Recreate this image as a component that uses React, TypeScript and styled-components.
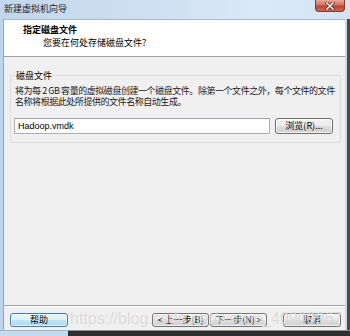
import React from 'react';
import styled, { createGlobalStyle } from 'styled-components';

const GlobalStyle = createGlobalStyle`
  html, body {
    margin: 0;
    padding: 0;
    background: #3a3a3a;
  }
  body {
    font-family: "Noto Sans CJK SC", "Liberation Sans", sans-serif;
    font-size: 9px;
    color: #000000;
  }
`;

const Window = styled.div`
  position: relative;
  width: 350px;
  height: 336px;
  display: flex;
  flex-direction: column;
  overflow: hidden;
  background: #3a3a3a;
`;

const TitleBar = styled.div`
  height: 19px;
  display: flex;
  align-items: flex-start;
  justify-content: space-between;
  background: linear-gradient(to right, #c2d6ec 0%, #cfe0f3 45%, #dbe9f7 75%, #d2e3f4 100%);
`;

const Title = styled.span`
  padding: 3px 0 0 4px;
  line-height: 11px;
  color: #1e1e1e;
`;

const CloseButton = styled.div`
  width: 30px;
  height: 12px;
  margin-right: 5px;
  box-sizing: border-box;
  display: flex;
  align-items: center;
  justify-content: center;
  border: 1px solid #83392d;
  border-top: none;
  border-radius: 0 0 4px 4px;
  background: linear-gradient(to bottom, #e8a899 0%, #d2705e 45%, #c0412d 55%, #cf6a52 100%);
`;

const Middle = styled.div`
  flex: 1;
  display: flex;
  min-height: 0;
`;

const LeftFrame = styled.div`
  width: 3px;
  background: #bcd4ee;
  border-right: 1px solid #8fa6bf;
`;

const RightFrame = styled.div`
  width: 5px;
  border-left: 2px solid #c9d7e6;
  box-sizing: border-box;
  background: #4a4a4a;
`;

const Main = styled.div`
  flex: 1;
  min-width: 0;
  display: flex;
  flex-direction: column;
  background: #f0f0f0;
  border-top: 1px solid #a9b8c8;
`;

const Header = styled.div`
  height: 37px;
  box-sizing: border-box;
  background: #ffffff;
  border-bottom: 1px solid #a0a0a0;
  padding: 4px 0 0 19px;
`;

const HeaderTitle = styled.div`
  font-weight: 700;
  line-height: 11px;
`;

const HeaderSub = styled.div`
  line-height: 11px;
  margin: 2px 0 0 20px;
`;

const Body = styled.div`
  flex: 1;
  padding-top: 13px;
`;

const GroupBox = styled.fieldset`
  min-width: 0;
  margin: 0 4px 0 6px;
  padding: 0 7px 8px 3px;
  border: 1px solid #dcdcdc;
  border-radius: 2px;
`;

const GroupLabel = styled.legend`
  padding: 0 1px;
  margin-left: 1px;
  line-height: 11px;
`;

const Description = styled.p`
  margin: 4px 0 0 1px;
  line-height: 11px;
  color: #1a1a1a;
  white-space: nowrap;
  letter-spacing: -0.45px;
`;

const FileRow = styled.div`
  margin-top: 11px;
  display: flex;
  gap: 5px;
  height: 16px;
`;

const FileInput = styled.div`
  flex: 1;
  box-sizing: border-box;
  background: #ffffff;
  border: 1px solid #abadb3;
  border-top-color: #a0a3a9;
  padding-left: 3px;
  font-family: "Liberation Sans", sans-serif;
  font-size: 9px;
  line-height: 14px;
`;

const Button = styled.button<{ $width?: number; $default?: boolean }>`
  width: ${(p) => p.$width ?? 58}px;
  flex-shrink: 0;
  height: 100%;
  margin: 0;
  padding: 0;
  box-sizing: border-box;
  font-family: "Noto Sans CJK SC", "Liberation Sans", sans-serif;
  font-size: 9px;
  line-height: 12px;
  color: #000000;
  white-space: nowrap;
  border: 1px solid ${(p) => (p.$default ? '#3c7fb1' : '#707070')};
  border-radius: 3px;
  background: ${(p) =>
    p.$default
      ? 'linear-gradient(to bottom, #eaf6fd 0%, #d9f0fc 50%, #bee6fd 51%, #a7d9f5 100%)'
      : 'linear-gradient(to bottom, #f2f2f2 0%, #ebebeb 50%, #dddddd 51%, #cfcfcf 100%)'};
  box-shadow: inset 0 0 0 1px rgba(255, 255, 255, 0.7);
`;

const Footer = styled.div`
  height: 25px;
  box-sizing: border-box;
  border-top: 1px solid #a0a0a0;
  box-shadow: inset 0 1px 0 #ffffff;
  padding: 7px 4px 3px 6px;
  display: flex;
`;

const Spacer = styled.div`
  flex: 1;
`;

const NavGroup = styled.div`
  display: flex;
  gap: 1px;
  margin-right: 16px;
`;

const BottomFrame = styled.div`
  height: 6px;
  display: flex;
`;

const BottomLeft = styled.div`
  width: 68px;
  background: #c6daee;
  border-top: 1px solid #9fb2c6;
`;

const BottomRest = styled.div`
  flex: 1;
  background: #2f2f2f;
  border-top: 1px solid #8e8e8e;
`;

const Watermark = styled.div`
  position: absolute;
  left: 70px;
  top: 309px;
  font-family: "Liberation Sans", sans-serif;
  font-size: 16px;
  line-height: 20px;
  color: rgba(175, 175, 175, 0.45);
  text-shadow: 0 0 1px rgba(255, 255, 255, 0.8);
  white-space: nowrap;
  pointer-events: none;
`;

function CloseIcon() {
  return (
    <svg width="10" height="8" viewBox="0 0 10 8">
      <path d="M2 1 L8 7 M8 1 L2 7" stroke="#5a1c12" strokeWidth="3" strokeLinecap="square" />
      <path d="M2 1 L8 7 M8 1 L2 7" stroke="#ffffff" strokeWidth="1.6" strokeLinecap="square" />
    </svg>
  );
}

export default function App() {
  return (
    <>
      <GlobalStyle />
      <Window>
        <TitleBar>
          <Title>新建虚拟机向导</Title>
          <CloseButton>
            <CloseIcon />
          </CloseButton>
        </TitleBar>
        <Middle>
          <LeftFrame />
          <Main>
            <Header>
              <HeaderTitle>指定磁盘文件</HeaderTitle>
              <HeaderSub>您要在何处存储磁盘文件?</HeaderSub>
            </Header>
            <Body>
              <GroupBox>
                <GroupLabel>磁盘文件</GroupLabel>
                <Description>
                  将为每 2 GB 容量的虚拟磁盘创建一个磁盘文件。除第一个文件之外，每个文件的文件
                  <br />
                  名称将根据此处所提供的文件名称自动生成。
                </Description>
                <FileRow>
                  <FileInput>Hadoop.vmdk</FileInput>
                  <Button>浏览(R)...</Button>
                </FileRow>
              </GroupBox>
            </Body>
            <Footer>
              <Button $default>帮助</Button>
              <Spacer />
              <NavGroup>
                <Button $width={57}>&lt; 上一步(B)</Button>
                <Button $width={57}>下一步(N) &gt;</Button>
              </NavGroup>
              <Button>取消</Button>
            </Footer>
          </Main>
          <RightFrame />
        </Middle>
        <BottomFrame>
          <BottomLeft />
          <BottomRest />
        </BottomFrame>
        <Watermark>https://blog.csdn.net/weixin_40909967</Watermark>
      </Window>
    </>
  );
}
